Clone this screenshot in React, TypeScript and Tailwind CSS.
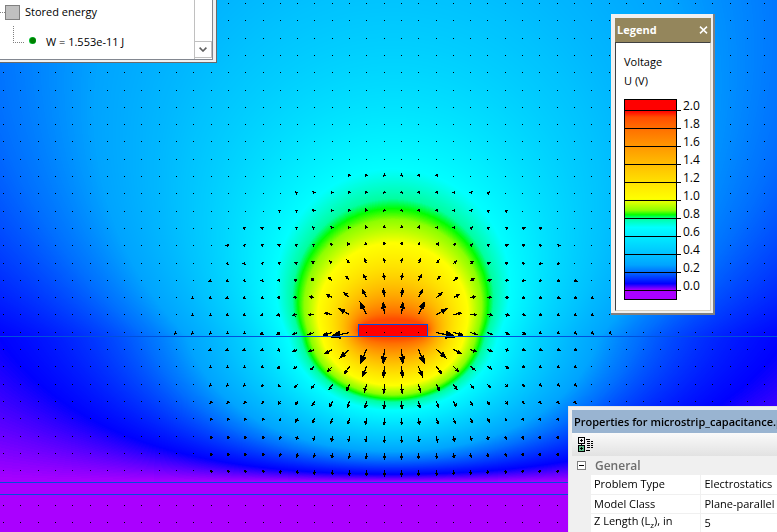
import { useLayoutEffect, useRef, useState } from "react";

type RGB = [number, number, number];
type Arrow = { x: number; y: number; dx: number; dy: number };

// Colour scale: voltage -> colour, from low to high.
const SCALE: { u: number; c: RGB }[] = [
  { u: -0.1, c: [170, 0, 255] },
  { u: 0.0, c: [170, 0, 255] },
  { u: 0.07, c: [0, 0, 255] },
  { u: 0.14, c: [0, 60, 255] },
  { u: 0.2, c: [0, 110, 255] },
  { u: 0.28, c: [0, 164, 255] },
  { u: 0.4, c: [0, 194, 255] },
  { u: 0.6, c: [0, 236, 255] },
  { u: 0.7, c: [0, 255, 255] },
  { u: 0.8, c: [0, 255, 160] },
  { u: 0.84, c: [0, 255, 0] },
  { u: 0.89, c: [140, 255, 0] },
  { u: 1.02, c: [255, 255, 0] },
  { u: 1.2, c: [255, 226, 0] },
  { u: 1.4, c: [255, 190, 0] },
  { u: 1.6, c: [255, 152, 0] },
  { u: 1.8, c: [255, 112, 0] },
  { u: 1.93, c: [255, 76, 0] },
  { u: 2.0, c: [255, 0, 0] },
  { u: 2.12, c: [255, 0, 0] },
];

const INTERFACE_Y = 336;
const GROUND_Y = 482;
const GROUND_BOTTOM = 494;
const H = GROUND_Y - INTERFACE_Y;
const HALF = 35;
const THICK = 12;
const FOCUS = 34;
const K = 0.6;
const TERMS = 7;
const PITCH = 17.3;
const ARROW_GAIN = 690;
const ARROW_MIN = 2.05;

// Logarithmic distance to a flat conductor of half-width FOCUS.
function stripLog(x: number, y: number) {
  const re = x * x - y * y - FOCUS * FOCUS;
  const im = 2 * x * y;
  const m = Math.sqrt(re * re + im * im);
  const sr = Math.sqrt(Math.max(0, (m + re) / 2));
  const si = Math.sqrt(Math.max(0, (m - re) / 2));
  const a = Math.abs(x) + sr;
  const b = Math.abs(y) + si;
  return 0.5 * Math.log((a * a + b * b) / 4);
}

// Image-charge series for a line over a grounded dielectric slab.
function rawPotential(x: number, y: number) {
  const ay = Math.abs(y);
  let sum = stripLog(x, y + 2 * H + 6) - stripLog(x, y - 6);
  let k = 1;
  for (let n = 1; n <= TERMS; n++) {
    k *= -K;
    const top = y + 2 * (n + 1) * H;
    const low = ay + 2 * n * H;
    sum += 0.5 * k * Math.log((x * x + top * top) / (x * x + low * low));
  }
  return sum;
}

const GAIN = 2.03 / rawPotential(0, 12);

function potential(x: number, py: number) {
  if (py >= GROUND_Y) return 0;
  return Math.min(1.93, Math.max(0, GAIN * rawPotential(x, INTERFACE_Y - py)));
}

function colourAt(u: number): RGB {
  let i = 1;
  while (i < SCALE.length - 1 && SCALE[i].u < u) i++;
  const a = SCALE[i - 1];
  const b = SCALE[i];
  const t = Math.min(1, Math.max(0, (u - a.u) / (b.u - a.u)));
  return [0, 1, 2].map((j) => a.c[j] + (b.c[j] - a.c[j]) * t) as RGB;
}

const LUT = Array.from({ length: 1024 }, (_, i) => colourAt((i / 1023) * 2));

function fieldArrows(w: number, h: number, cx: number): Arrow[] {
  const out: Arrow[] = [];
  const x0 = (cx - 389.5) % PITCH;
  for (let j = 0; 3.5 + j * PITCH < h; j++) {
    const y = Math.floor(3.5 + j * PITCH);
    if (y > GROUND_Y && y < GROUND_BOTTOM) continue;
    for (let i = 0; x0 + i * PITCH < w; i++) {
      const x = Math.floor(x0 + i * PITCH);
      const rx = x + 0.5 - cx;
      const inside = Math.abs(rx) < HALF && y > INTERFACE_Y - THICK && y < INTERFACE_Y;
      let dx = 0;
      let dy = 0;
      if (!inside && y < GROUND_Y) {
        const up = INTERFACE_Y - y;
        dx = (-ARROW_GAIN * GAIN * (rawPotential(rx + 1, up) - rawPotential(rx - 1, up))) / 2;
        dy = (-ARROW_GAIN * GAIN * (rawPotential(rx, up - 1) - rawPotential(rx, up + 1))) / 2;
      }
      out.push({ x, y, dx, dy });
    }
  }
  return out;
}

function arrowPath({ x, y, dx, dy }: Arrow) {
  const len = Math.hypot(dx, dy);
  if (len < ARROW_MIN) return `M${x} ${y}h1v1h-1z`;
  const ux = dx / len;
  const uy = dy / len;
  const l = Math.max(len, 3.4);
  const head = Math.max(3.4, l * 0.55);
  const half = Math.max(1.9, l * 0.2);
  const sx = x + 0.5;
  const sy = y + 0.5;
  const tx = sx + ux * l;
  const ty = sy + uy * l;
  const bx = tx - ux * head;
  const by = ty - uy * head;
  const f = (n: number) => n.toFixed(2);
  const p = (a: number, b: number) => `${f(a)} ${f(b)}`;
  const s = 0.6;
  return (
    `M${p(sx - uy * s, sy + ux * s)}L${p(bx - uy * s, by + ux * s)}L${p(bx - uy * half, by + ux * half)}` +
    `L${p(tx, ty)}L${p(bx + uy * half, by - ux * half)}L${p(bx + uy * s, by - ux * s)}L${p(sx + uy * s, sy - ux * s)}z`
  );
}

function FieldPlot() {
  const box = useRef<HTMLDivElement>(null);
  const canvas = useRef<HTMLCanvasElement>(null);
  const [size, setSize] = useState({ w: 0, h: 0 });

  useLayoutEffect(() => {
    const measure = () => {
      if (box.current) setSize({ w: box.current.clientWidth, h: box.current.clientHeight });
    };
    measure();
    window.addEventListener("resize", measure);
    return () => window.removeEventListener("resize", measure);
  }, []);

  const { w, h } = size;
  const cx = Math.floor(w / 2) + 5;

  useLayoutEffect(() => {
    const c = canvas.current;
    const g = c?.getContext("2d");
    if (!c || !g || !w || !h) return;
    c.width = w;
    c.height = h;
    const img = g.createImageData(w, h);
    for (let y = 0, p = 0; y < h; y++) {
      for (let x = 0; x < w; x++, p += 4) {
        const rgb = LUT[Math.round((potential(x + 0.5 - cx, y + 0.5) / 2) * 1023)];
        img.data[p] = rgb[0];
        img.data[p + 1] = rgb[1];
        img.data[p + 2] = rgb[2];
        img.data[p + 3] = 255;
      }
    }
    g.putImageData(img, 0, 0);
  }, [w, h, cx]);

  const arrows = w ? fieldArrows(w, h, cx).map(arrowPath).join("") : "";

  return (
    <div ref={box} className="absolute inset-0">
      <canvas ref={canvas} className="absolute inset-0 h-full w-full" />
      <svg className="absolute inset-0 h-full w-full" shapeRendering="crispEdges" aria-label="Voltage field plot">
        <rect x={cx - HALF} y={INTERFACE_Y - THICK} width={HALF * 2} height={THICK} fill="#ff0000" />
        <path d={arrows} fill="#000" />
        <g stroke="#0050dc" fill="none">
          <rect x={cx - HALF + 0.5} y={INTERFACE_Y - THICK + 0.5} width={HALF * 2 - 1} height={THICK} />
          <path d={`M0 ${INTERFACE_Y + 0.5}H${w}M0 ${GROUND_Y + 0.5}H${w}M0 ${GROUND_BOTTOM + 0.5}H${w}`} />
        </g>
      </svg>
    </div>
  );
}

function ResultsPanel() {
  return (
    <section className="absolute top-0 left-0 flex h-[63px] w-[217px] border-r border-b border-[#6a6a6a] bg-[#f0f0f0] pr-[3px] pb-[2px] text-[11px]">
      <div className="flex flex-1 border-r border-b border-[#828790] bg-white">
        <ul className="flex-1">
          <li className="flex h-6 items-center gap-1">
            <span className="flex items-center">
              <span className="w-[5px] border-t border-dotted border-[#808080]" />
              <span className="h-[15px] w-[15px] border border-[#808080] bg-[#c0c0c0]" />
            </span>
            <span className="pl-px">Stored energy</span>
          </li>
          <li className="flex items-start pt-[2px] pl-[13px]">
            <span className="h-[17px] w-[11px] border-b border-l border-dotted border-[#808080]" />
            <svg className="mt-[11px] ml-[5px] h-[7px] w-[7px]" viewBox="0 0 7 7" aria-hidden="true">
              <circle cx="3.5" cy="3.5" r="3.5" fill="#00c030" />
              <circle cx="3.9" cy="3.5" r="2.9" fill="#008000" />
            </svg>
            <span className="mt-2 ml-[10px] leading-4">W = 1.553e-11 J</span>
          </li>
        </ul>
        <div className="flex w-[18px] flex-col justify-end border-l border-[#c0c0c0] pb-px">
          <button
            type="button"
            aria-label="Scroll down"
            className="flex h-[17px] w-[17px] items-center justify-center border-y border-r border-[#c0c0c0] bg-white"
          >
            <svg width="8" height="5" viewBox="0 0 8 5" fill="none" stroke="#606060" strokeWidth="1.6">
              <path d="M.6 .6L4 4L7.4 .6" />
            </svg>
          </button>
        </div>
      </div>
    </section>
  );
}

const TICKS = ["2.0", "1.8", "1.6", "1.4", "1.2", "1.0", "0.8", "0.6", "0.4", "0.2", "0.0"];

function LegendPanel() {
  const span = 2.2222;
  const stops = [...SCALE]
    .reverse()
    .map(({ u, c }) => `rgb(${c.join(",")}) ${(((2.1222 - u) / span) * 100).toFixed(1)}%`)
    .join(",");
  return (
    <section className="absolute top-[14px] right-[62px] flex h-[301px] w-[104px] flex-col border-r-2 border-b-2 border-[#808080] bg-[#f0f0f0] pt-[4px] pr-[2px] pb-[2px] pl-[4px]">
      <header className="flex h-6 items-center justify-between bg-[#94865c] pr-[3px] pl-[2px] text-white">
        <h2 className="text-[11px] font-bold">Legend</h2>
        <button type="button" aria-label="Close" className="flex h-4 w-[10px] items-center justify-center">
          <svg width="9" height="8" viewBox="0 0 9 8" stroke="#fff" strokeWidth="1.5">
            <path d="M1 .6L8 7.4M8 .6L1 7.4" />
          </svg>
        </button>
      </header>
      <div className="flex-1 border border-t-[#404040] border-r-[#d8d0c0] border-b-[#d8d0c0] border-l-[#404040] bg-white pl-2 text-[11px]">
        <p className="mt-[9px] leading-[19px]">Voltage</p>
        <p className="leading-[19px]">U (V)</p>
        <div className="mt-[9px] flex">
          <div
            className="flex h-[201px] w-[53px] flex-col border border-black pt-[10px]"
            style={{ backgroundImage: `linear-gradient(to bottom,${stops})` }}
          >
            {TICKS.map((t) => (
              <span key={t} className="h-[18px] w-[56px] shrink-0 border-t border-black" />
            ))}
          </div>
          <ul className="-mt-[2px] pl-[6px] text-xs">
            {TICKS.map((t) => (
              <li key={t} className="h-[18px] leading-[18px]">
                {t}
              </li>
            ))}
          </ul>
        </div>
      </div>
    </section>
  );
}

const PROPERTIES = [
  {
    id: "type",
    name: "Problem Type",
    value: "Electrostatics",
  },
  {
    id: "class",
    name: "Model Class",
    value: "Plane-parallel",
  },
  {
    id: "length",
    name: (
      <span className="block pb-[3px] leading-[14px]">
        Z Length (L<span className="align-sub text-[8px] leading-none">z</span>), in
      </span>
    ),
    value: "5",
  },
];

function PropertiesPanel() {
  return (
    <section className="absolute top-[406px] right-0 bottom-0 w-[209px] overflow-hidden border-t border-l border-[#e3e3e3] bg-[#f0f0f0] pt-[3px] pl-[3px] text-[11px] text-black">
      <h2 className="h-[23px] overflow-hidden bg-[#99b4d1] pl-[2px] leading-[23px] font-semibold whitespace-nowrap">
        Properties for microstrip_capacitance.pbm
      </h2>
      <div className="flex h-[23px] items-center bg-gradient-to-b from-[#fafafa] to-[#e2e2e2] pl-[6px]">
        <button type="button" aria-label="Expand all" className="h-[15px] w-[15px]">
          <svg width="15" height="15" viewBox="0 0 15 15" shapeRendering="crispEdges" fill="none" stroke="#000">
            <rect x=".5" y=".5" width="6" height="6" />
            <path d="M2 3.5h3M3.5 2v3M3.5 7v2" />
            <rect x=".5" y="8.5" width="6" height="6" fill="#63c08c" />
            <path d="M2 11.5h3M3.5 10v3" />
            <path d="M8 2.5h4M9 4.5h3M13 4.5h2M9 6.5h3M13 6.5h2M9 8.5h3M13 8.5h2M9 10.5h3M13 10.5h2M8 13.5h4" />
          </svg>
        </button>
      </div>
      <div className="flex h-[19px] items-center gap-[9px] pl-[5px]">
        <button
          type="button"
          aria-label="Collapse General"
          className="flex h-[9px] w-[9px] items-center justify-center border border-[#808080] bg-white"
        >
          <span className="h-px w-[5px] bg-black" />
        </button>
        <h3 className="text-xs font-semibold text-[#6d6d6d]">General</h3>
      </div>
      <table className="ml-[19px] w-[230px] table-fixed border-collapse text-left">
        <tbody>
          {PROPERTIES.map(({ id, name, value }) => (
            <tr key={id} className="h-[19px] border-b border-[#f0f0f0] bg-white leading-[18px] whitespace-nowrap">
              <th scope="row" className="w-[109px] border-r border-[#f0f0f0] p-0 pl-[3px] font-normal">
                {name}
              </th>
              <td className="p-0 pl-1">{value}</td>
            </tr>
          ))}
        </tbody>
      </table>
    </section>
  );
}

export default function App() {
  return (
    <main className="relative h-screen w-full overflow-hidden bg-[#00b4ff] font-['Open_Sans','Noto_Sans',sans-serif] text-xs text-black">
      <FieldPlot />
      <ResultsPanel />
      <LegendPanel />
      <PropertiesPanel />
    </main>
  );
}
